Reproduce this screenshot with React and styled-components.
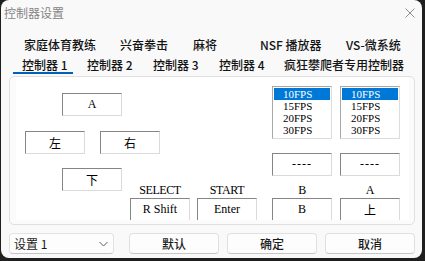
import React from 'react';
import styled, { createGlobalStyle } from 'styled-components';

const UI_FONT = '"Noto Sans CJK SC", "Noto Sans", sans-serif';
const KEY_FONT = '"Liberation Serif", "Noto Sans CJK SC", serif';

const GlobalStyle = createGlobalStyle`
  html, body {
    margin: 0;
    padding: 0;
    background: #1f1f1f;
  }
`;

const Window = styled.div`
  margin-left: 1px;
  width: 421px;
  height: 258px;
  background: #f9f9f9;
  border-radius: 8px;
  overflow: hidden;
  display: flex;
  flex-direction: column;
  font-family: ${UI_FONT};
  font-size: 12px;
  color: #1b1b1b;
`;

const TitleBar = styled.div`
  height: 26px;
  display: flex;
  align-items: center;
  justify-content: space-between;
  padding: 0 7px 0 3px;
`;

const Title = styled.span`
  line-height: 14px;
  color: #858585;
`;

const TabStrip = styled.div`
  padding-top: 12px;
  display: flex;
  flex-direction: column;
  gap: 4px;
`;

const TabRow = styled.div`
  display: flex;
  padding-left: ${(p) => p.$pl}px;
`;

const Tab = styled.div`
  width: ${(p) => p.$w}px;
  padding-left: ${(p) => p.$pl || 0}px;
  box-sizing: border-box;
  line-height: 14px;
  white-space: nowrap;
  font-weight: 500;
  color: #141414;
  border-bottom: 2px solid ${(p) => (p.$active ? '#005fb8' : 'transparent')};
  flex-shrink: 0;
`;

const Panel = styled.div`
  margin: 2px 0 0 8px;
  width: 406px;
  height: 149px;
  box-sizing: border-box;
  border: 1px solid #e0e0e0;
  border-radius: 5px;
  background: #fbfbfb;
  padding: 0 5px 4px 6px;
  display: flex;
`;

const Page = styled.div`
  flex: 1;
  background: #fff;
  overflow: hidden;
  display: flex;
`;

const LeftSide = styled.div`
  width: 240px;
  padding-top: 16px;
  display: flex;
  flex-direction: column;
`;

const KeyRow = styled.div`
  display: flex;
  align-items: flex-start;
  margin-top: ${(p) => p.$mt || 0}px;
`;

const RightSide = styled.div`
  margin-left: 16px;
  padding-top: 9px;
  display: grid;
  grid-template-columns: 60px 60px;
  column-gap: 8px;
  align-content: start;
`;

const KeyBox = styled.div`
  width: 60px;
  height: 23px;
  box-sizing: border-box;
  margin-left: ${(p) => p.$ml || 0}px;
  margin-top: ${(p) => p.$mt || 0}px;
  border: 1px solid;
  border-color: #858585 #dadada #dadada #858585;
  background: #fff;
  display: flex;
  align-items: center;
  justify-content: center;
  font-family: ${KEY_FONT};
  font-size: 12px;
  letter-spacing: ${(p) => (p.$wide ? 1 : 0)}px;
  color: #000;
  flex-shrink: 0;
  white-space: pre;
`;

const KeyGroup = styled.div`
  display: flex;
  flex-direction: column;
  margin-left: ${(p) => p.$ml || 0}px;
  margin-top: ${(p) => p.$mt || 0}px;
`;

const KeyLabel = styled.div`
  height: 15px;
  line-height: 15px;
  text-align: center;
  font-family: ${KEY_FONT};
  font-size: 12px;
  letter-spacing: -0.4px;
  color: #000;
`;

const FpsList = styled.div`
  width: 60px;
  height: 53px;
  box-sizing: border-box;
  border: 1px solid;
  border-color: #a8a8a8 #dcdcdc #dcdcdc #a8a8a8;
  padding: 1px;
  background: #fff;
`;

const FpsItem = styled.div`
  height: 12px;
  line-height: 12px;
  padding-left: 9px;
  font-family: ${KEY_FONT};
  font-size: 11px;
  background: ${(p) => (p.$selected ? '#0078d7' : 'transparent')};
  color: ${(p) => (p.$selected ? '#fff' : '#000')};
`;

const Footer = styled.div`
  display: flex;
  gap: 8px;
  margin: 8px 0 0 8px;
  height: 21px;
`;

const Combo = styled.div`
  width: 105px;
  margin-right: 7px;
  box-sizing: border-box;
  border: 1px solid #e2e2e2;
  border-bottom-color: #c4c4c4;
  border-radius: 4px;
  background: #fdfdfd;
  display: flex;
  align-items: center;
  justify-content: space-between;
  padding: 0 5px 0 4px;
  line-height: 14px;
`;

const Button = styled.div`
  width: 90px;
  box-sizing: border-box;
  border: 1px solid #e0e0e0;
  border-bottom-color: #c6c6c6;
  border-radius: 4px;
  background: #fdfdfd;
  display: flex;
  align-items: center;
  justify-content: center;
  font-weight: 500;
  line-height: 14px;
`;

const CloseIcon = () => (
  <svg width="10" height="10" viewBox="0 0 10 10">
    <path d="M0.5 0.5 L9.5 9.5 M9.5 0.5 L0.5 9.5" stroke="#8f8f8f" strokeWidth="1" />
  </svg>
);

const Chevron = () => (
  <svg width="9" height="6" viewBox="0 0 9 6">
    <polyline points="0.5,1 4.5,5 8.5,1" fill="none" stroke="#5f5f5f" strokeWidth="1" />
  </svg>
);

const topTabs = [
  ['家庭体育教练', 96],
  ['兴奋拳击', 73],
  ['麻将', 67],
  ['NSF 播放器', 86],
  ['VS-微系统', 70],
];

const bottomTabs = [
  ['控制器 1', 60, 9, true],
  ['控制器 2', 66, 14],
  ['控制器 3', 66, 14],
  ['控制器 4', 65, 14],
  ['疯狂攀爬者专用控制器', 140, 14],
];

const FPS = ['10FPS', '15FPS', '20FPS', '30FPS'];

const App = () => (
  <>
    <GlobalStyle />
    <Window>
      <TitleBar>
        <Title>控制器设置</Title>
        <CloseIcon />
      </TitleBar>

      <TabStrip>
        <TabRow $pl={23}>
          {topTabs.map(([label, w]) => (
            <Tab key={label} $w={w}>{label}</Tab>
          ))}
        </TabRow>
        <TabRow $pl={12}>
          {bottomTabs.map(([label, w, pl, active]) => (
            <Tab key={label} $w={w} $pl={pl} $active={active}>{label}</Tab>
          ))}
        </TabRow>
      </TabStrip>

      <Panel>
        <Page>
          <LeftSide>
            <KeyRow>
              <KeyBox $ml={46}>A</KeyBox>
            </KeyRow>
            <KeyRow $mt={15}>
              <KeyBox $ml={9}>左</KeyBox>
              <KeyBox $ml={15}>右</KeyBox>
            </KeyRow>
            <KeyRow $mt={14}>
              <KeyBox $ml={46}>下</KeyBox>
              <KeyGroup $ml={8} $mt={15}>
                <KeyLabel>SELECT</KeyLabel>
                <KeyBox>R Shift</KeyBox>
              </KeyGroup>
              <KeyGroup $ml={7} $mt={15}>
                <KeyLabel>START</KeyLabel>
                <KeyBox>Enter</KeyBox>
              </KeyGroup>
            </KeyRow>
          </LeftSide>

          <RightSide>
            {[0, 1].map((n) => (
              <FpsList key={n}>
                {FPS.map((f, i) => (
                  <FpsItem key={f} $selected={i === 0}>{f}</FpsItem>
                ))}
              </FpsList>
            ))}
            <KeyBox $mt={14} $wide>----</KeyBox>
            <KeyBox $mt={14} $wide>----</KeyBox>
            <KeyGroup $mt={7}>
              <KeyLabel>B</KeyLabel>
              <KeyBox>B</KeyBox>
            </KeyGroup>
            <KeyGroup $mt={7}>
              <KeyLabel>A</KeyLabel>
              <KeyBox>上</KeyBox>
            </KeyGroup>
          </RightSide>
        </Page>
      </Panel>

      <Footer>
        <Combo>
          <span>设置 1</span>
          <Chevron />
        </Combo>
        <Button>默认</Button>
        <Button>确定</Button>
        <Button>取消</Button>
      </Footer>
    </Window>
  </>
);

export default App;
